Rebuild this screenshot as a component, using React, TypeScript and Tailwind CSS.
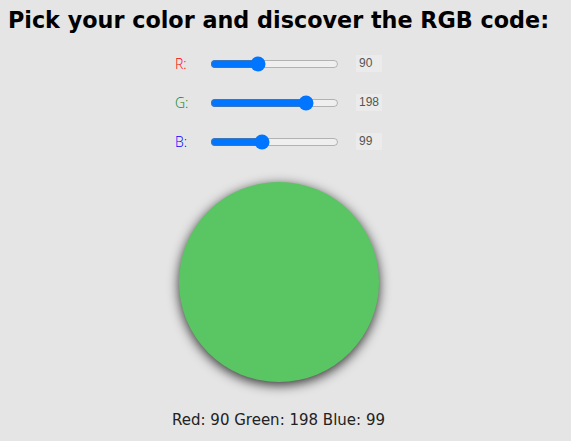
import { useState } from 'react';

const font = { fontFamily: '"DejaVu Sans", sans-serif' };

function Row({ label, color, value, onChange }: { label: string; color: string; value: number; onChange: (v: number) => void }) {
  return (
    <div className="flex items-center h-[39px]">
      <span className={`w-[33px] text-[14px] ${color}`} style={{ fontFamily: '"Open Sans", sans-serif', fontWeight: 300 }}>{label}</span>
      <input
        type="range"
        min={0}
        max={255}
        value={value}
        onChange={(e) => onChange(Number(e.target.value))}
        className="w-[129px] mx-[2px]"
      />
      <span className="ml-[15px] w-[26px] h-[17px] bg-[#ebebeb] text-[#555] text-[12px] leading-[17px] pl-[3px]" style={{ fontFamily: '"Liberation Sans", Arial, sans-serif' }}>
        {value}
      </span>
    </div>
  );
}

export default function App() {
  const [r, setR] = useState(90);
  const [g, setG] = useState(198);
  const [b, setB] = useState(99);

  return (
    <div className="min-h-screen bg-[#e5e5e5]">
      <div className="w-[557px] flex flex-col items-center">
        <h1 className="mt-[6px] text-[22.3px] font-bold text-black leading-[28px] whitespace-nowrap" style={font}>
          Pick your color and discover the RGB code:
        </h1>
        <div className="mt-[10px] flex flex-col items-center">
          <Row label="R:" color="text-[#ff0000]" value={r} onChange={setR} />
          <Row label="G:" color="text-[#008000]" value={g} onChange={setG} />
          <Row label="B:" color="text-[#0000ff]" value={b} onChange={setB} />
        </div>
        <div
          className="mt-[21px] w-[200px] h-[200px] rounded-full shadow-[0_3px_12px_rgba(0,0,0,0.8)]"
          style={{ backgroundColor: `rgb(${r}, ${g}, ${b})` }}
        />
        <p className="mt-[27px] text-[15px] text-[#222]" style={font}>
          Red: {r} Green: {g} Blue: {b}
        </p>
      </div>
    </div>
  );
}
